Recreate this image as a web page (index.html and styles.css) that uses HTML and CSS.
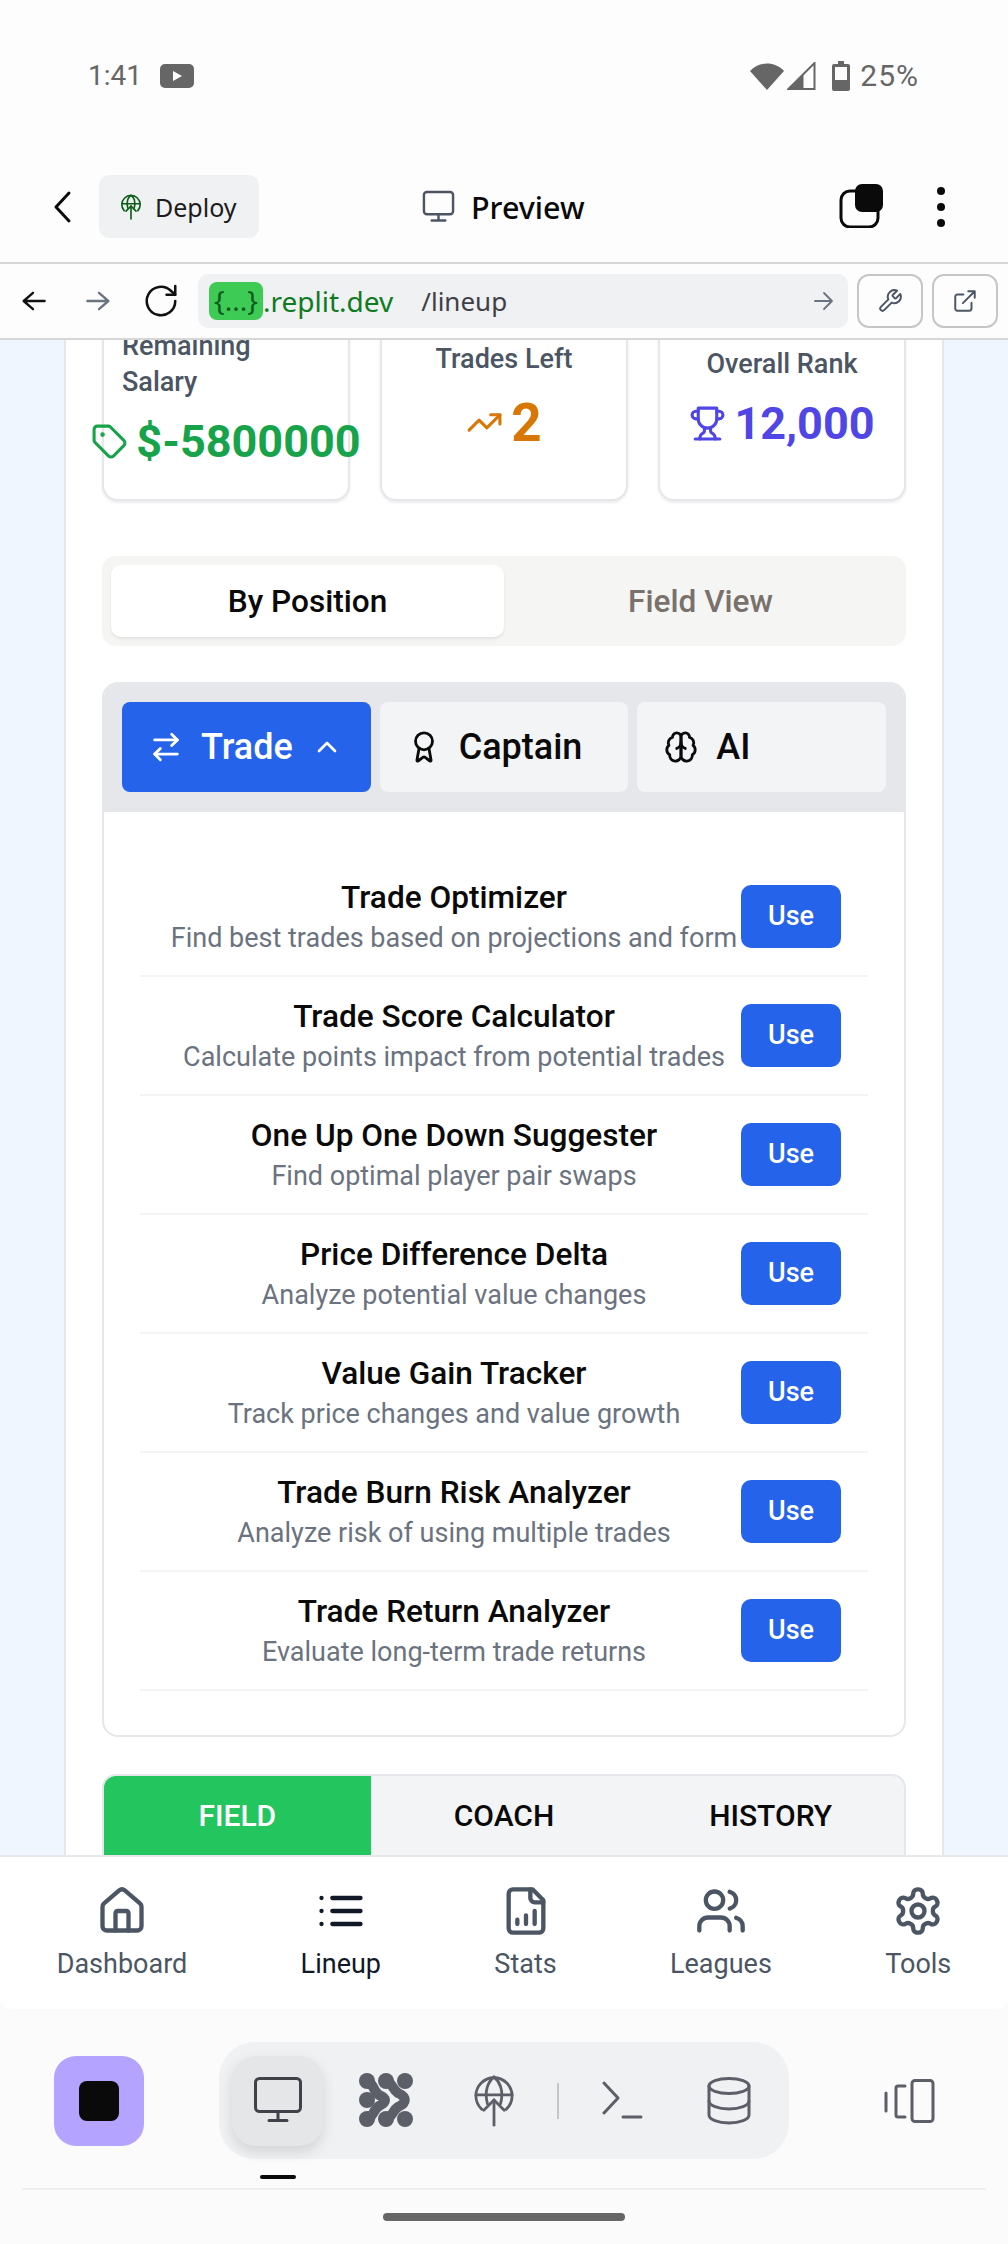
FILE: index.html
```html
<!DOCTYPE html>
<html lang="en">
<head>
    <meta charset="UTF-8">
    <meta name="viewport" content="width=device-width, initial-scale=1.0">
    <title>Lineup Preview</title>
    <link rel="stylesheet" href="styles.css">
</head>
<body>
    <div class="status-bar">
        <div class="status-left">
            <span>1:41</span>
            <svg class="yt-icon" viewBox="0 0 34 24"><rect width="34" height="24" rx="5" fill="#666"/><path d="M13 7l9 5-9 5z" fill="#fff"/></svg>
        </div>
        <div class="status-right">
            <svg class="wifi-icon" viewBox="0 0 34 28"><path d="M0 9C9 -1 25 -1 34 9L17 28z" fill="#666"/></svg>
            <svg class="signal-icon" viewBox="0 0 28 28"><path d="M27 1V27H1z" fill="none" stroke="#666" stroke-width="2"/><path d="M16 12V27H1z" fill="#666"/></svg>
            <svg class="battery-icon" viewBox="0 0 18 30"><path d="M6 0h6v3h4a2 2 0 0 1 2 2v23a2 2 0 0 1-2 2H2a2 2 0 0 1-2-2V5a2 2 0 0 1 2-2h4z" fill="#666"/><rect x="3" y="6" width="12" height="13" fill="#fcfcfc"/></svg>
            <span>25%</span>
        </div>
    </div>

    <div class="app-bar">
        <svg class="back-icon" viewBox="0 0 24 34"><path d="M18 3L5 17l13 14" fill="none" stroke="#0a0a0a" stroke-width="3" stroke-linecap="round" stroke-linejoin="round"/></svg>
        <div class="deploy-btn">
            <svg class="deploy-icon" viewBox="0 0 24 28" fill="none" stroke="currentColor" stroke-width="1.800" stroke-linecap="round"><path d="M4.500 18A10 10 0 1 1 19.500 18"/><path d="M8.500 15C6.500 8 9 3 12 1.500C15 3 17.500 8 15.500 15"/><path d="M2 10.500H22"/><path d="M12 27V13"/><path d="M6.500 18.500L12 13l5.500 5.500"/></svg>
            <span>Deploy</span>
        </div>
        <div class="preview-title">
            <svg class="monitor-icon" viewBox="0 0 34 34" fill="none" stroke="#4b5563" stroke-width="2.500" stroke-linecap="round" stroke-linejoin="round"><rect x="2" y="2" width="30" height="23" rx="3"/><path d="M17 25v6M10 31.500h14"/></svg>
            <span>Preview</span>
        </div>
        <svg class="tabs-icon" viewBox="0 0 44 44"><rect x="2" y="7" width="37" height="36" rx="9" fill="none" stroke="#0a0a0a" stroke-width="3"/><rect x="16" y="0" width="28" height="28" rx="7" fill="#0a0a0a"/></svg>
        <div class="dots"><i></i><i></i><i></i></div>
    </div>

    <div class="url-bar">
        <svg class="url-nav back" viewBox="0 0 24 24" fill="none" stroke="#111" stroke-width="2" stroke-linecap="round" stroke-linejoin="round"><path d="M12 19l-8-7 8-7M4 12h18"/></svg>
        <svg class="url-nav forward" viewBox="0 0 24 24" fill="none" stroke="#6b7280" stroke-width="2" stroke-linecap="round" stroke-linejoin="round"><path d="M12 5l8 7-8 7M20 12H2"/></svg>
        <svg class="url-nav reload" viewBox="0 0 24 24" fill="none" stroke="#111" stroke-width="1.600" stroke-linecap="round" stroke-linejoin="round"><path d="M21 12a9 9 0 1 1-2.800-6.500L21 8"/><path d="M21 2.500V8h-5.500"/></svg>
        <div class="url-field">
            <span class="url-repl">{...}</span><span class="url-domain">.replit.dev</span>
            <span class="url-path">/lineup</span>
            <svg class="url-go" viewBox="0 0 24 24" fill="none" stroke="#6b7280" stroke-width="1.800" stroke-linecap="round" stroke-linejoin="round"><path d="M12 4l8 8-8 8M20 12H3"/></svg>
        </div>
        <div class="url-btn">
            <svg viewBox="0 0 24 24" fill="none" stroke="#4b5563" stroke-width="1.800" stroke-linecap="round" stroke-linejoin="round"><path d="M14.700 6.300a1 1 0 0 0 0 1.400l1.600 1.600a1 1 0 0 0 1.400 0l3.770-3.770a6 6 0 0 1-7.940 7.940l-6.910 6.910a2.120 2.120 0 0 1-3-3l6.910-6.910a6 6 0 0 1 7.940-7.940l-3.760 3.760z"/></svg>
        </div>
        <div class="url-btn">
            <svg viewBox="0 0 24 24" fill="none" stroke="#4b5563" stroke-width="1.800" stroke-linecap="round" stroke-linejoin="round"><path d="M18 13.500V19a2 2 0 0 1-2 2H5a2 2 0 0 1-2-2V8a2 2 0 0 1 2-2h5.500"/><path d="M15 3h6v6M10 14L21 3"/></svg>
        </div>
    </div>

    <main class="viewport">
        <div class="panel">
            <div class="stats">
                <div class="stat-card salary">
                    <div class="stat-label">Remaining Salary</div>
                    <div class="stat-value green">
                        <svg class="stat-icon" viewBox="0 0 24 24" fill="none" stroke="currentColor" stroke-width="2" stroke-linecap="round" stroke-linejoin="round"><path d="M12.586 2.586A2 2 0 0 0 11.172 2H4a2 2 0 0 0-2 2v7.172a2 2 0 0 0 .586 1.414l8.704 8.704a2.426 2.426 0 0 0 3.420 0l6.580-6.580a2.426 2.426 0 0 0 0-3.420z"/><circle cx="7.500" cy="7.500" r=".5" fill="currentColor"/></svg>
                        <span>$-5800000</span>
                    </div>
                </div>
                <div class="stat-card trades">
                    <div class="stat-label">Trades Left</div>
                    <div class="stat-value orange">
                        <svg class="stat-icon" viewBox="0 0 24 24" fill="none" stroke="currentColor" stroke-width="2" stroke-linecap="round" stroke-linejoin="round"><path d="M22 7l-8.500 8.500-5-5L2 17"/><path d="M16 7h6v6"/></svg>
                        <span>2</span>
                    </div>
                </div>
                <div class="stat-card rank">
                    <div class="stat-label">Overall Rank</div>
                    <div class="stat-value indigo">
                        <svg class="stat-icon" viewBox="0 0 24 24" fill="none" stroke="currentColor" stroke-width="2" stroke-linecap="round" stroke-linejoin="round"><path d="M6 9H4.500a2.500 2.500 0 0 1 0-5H6"/><path d="M18 9h1.500a2.500 2.500 0 0 0 0-5H18"/><path d="M4 22h16"/><path d="M10 14.660V17c0 .55-.47.98-.97 1.210C7.850 18.750 7 20.240 7 22"/><path d="M14 14.660V17c0 .55.47.98.97 1.210C16.150 18.750 17 20.240 17 22"/><path d="M18 2H6v7a6 6 0 0 0 12 0V2Z"/></svg>
                        <span>12,000</span>
                    </div>
                </div>
            </div>

            <div class="view-toggle">
                <div class="toggle-item active">By Position</div>
                <div class="toggle-item">Field View</div>
            </div>

            <section class="tools-card">
                <div class="tools-tabs">
                    <div class="tool-tab active">
                        <svg viewBox="0 0 24 24" fill="none" stroke="currentColor" stroke-width="2" stroke-linecap="round" stroke-linejoin="round"><path d="M16 3l4 4-4 4"/><path d="M20 7H4"/><path d="M8 21l-4-4 4-4"/><path d="M4 17h16"/></svg>
                        <span>Trade</span>
                        <svg class="chevron" viewBox="0 0 24 24" fill="none" stroke="currentColor" stroke-width="2" stroke-linecap="round" stroke-linejoin="round"><path d="M18 15l-6-6-6 6"/></svg>
                    </div>
                    <div class="tool-tab">
                        <svg viewBox="0 0 24 24" fill="none" stroke="currentColor" stroke-width="2" stroke-linecap="round" stroke-linejoin="round"><path d="M15.477 12.890l1.515 8.526a.5.5 0 0 1-.81.47l-3.580-2.687a1 1 0 0 0-1.197 0l-3.586 2.686a.5.5 0 0 1-.81-.469l1.514-8.526"/><circle cx="12" cy="8" r="6"/></svg>
                        <span>Captain</span>
                    </div>
                    <div class="tool-tab">
                        <svg viewBox="0 0 24 24" fill="none" stroke="currentColor" stroke-width="2" stroke-linecap="round" stroke-linejoin="round"><path d="M12 5a3 3 0 1 0-5.997.125 4 4 0 0 0-2.526 5.770 4 4 0 0 0 .556 6.588A4 4 0 1 0 12 18Z"/><path d="M12 5a3 3 0 1 1 5.997.125 4 4 0 0 1 2.526 5.770 4 4 0 0 1-.556 6.588A4 4 0 1 1 12 18Z"/><path d="M15 13a4.500 4.500 0 0 1-3-4 4.500 4.500 0 0 1-3 4"/></svg>
                        <span>AI</span>
                    </div>
                </div>
                <div class="tools-list">
                    <div class="tool-row">
                        <div class="tool-text"><div class="tool-name">Trade Optimizer</div><div class="tool-desc">Find best trades based on projections and form</div></div>
                        <div class="use-btn">Use</div>
                    </div>
                    <div class="tool-row">
                        <div class="tool-text"><div class="tool-name">Trade Score Calculator</div><div class="tool-desc">Calculate points impact from potential trades</div></div>
                        <div class="use-btn">Use</div>
                    </div>
                    <div class="tool-row">
                        <div class="tool-text"><div class="tool-name">One Up One Down Suggester</div><div class="tool-desc">Find optimal player pair swaps</div></div>
                        <div class="use-btn">Use</div>
                    </div>
                    <div class="tool-row">
                        <div class="tool-text"><div class="tool-name">Price Difference Delta</div><div class="tool-desc">Analyze potential value changes</div></div>
                        <div class="use-btn">Use</div>
                    </div>
                    <div class="tool-row">
                        <div class="tool-text"><div class="tool-name">Value Gain Tracker</div><div class="tool-desc">Track price changes and value growth</div></div>
                        <div class="use-btn">Use</div>
                    </div>
                    <div class="tool-row">
                        <div class="tool-text"><div class="tool-name">Trade Burn Risk Analyzer</div><div class="tool-desc">Analyze risk of using multiple trades</div></div>
                        <div class="use-btn">Use</div>
                    </div>
                    <div class="tool-row">
                        <div class="tool-text"><div class="tool-name">Trade Return Analyzer</div><div class="tool-desc">Evaluate long-term trade returns</div></div>
                        <div class="use-btn">Use</div>
                    </div>
                </div>
            </section>

            <div class="team-tabs">
                <div class="team-tab active">FIELD</div>
                <div class="team-tab">COACH</div>
                <div class="team-tab">HISTORY</div>
            </div>
        </div>
    </main>

    <nav class="bottom-nav">
        <div class="nav-item">
            <svg viewBox="0 0 24 24" fill="none" stroke="currentColor" stroke-width="2" stroke-linecap="round" stroke-linejoin="round"><path d="M15 21v-8a1 1 0 0 0-1-1h-4a1 1 0 0 0-1 1v8"/><path d="M3 10a2 2 0 0 1 .709-1.528l7-5.999a2 2 0 0 1 2.582 0l7 5.999A2 2 0 0 1 21 10v9a2 2 0 0 1-2 2H5a2 2 0 0 1-2-2z"/></svg>
            <span>Dashboard</span>
        </div>
        <div class="nav-item active">
            <svg viewBox="0 0 24 24" fill="none" stroke="currentColor" stroke-width="2" stroke-linecap="round" stroke-linejoin="round"><path d="M8 6h13M8 12h13M8 18h13M3 6h.01M3 12h.01M3 18h.01"/></svg>
            <span>Lineup</span>
        </div>
        <div class="nav-item">
            <svg viewBox="0 0 24 24" fill="none" stroke="currentColor" stroke-width="2" stroke-linecap="round" stroke-linejoin="round"><path d="M15 2H6a2 2 0 0 0-2 2v16a2 2 0 0 0 2 2h12a2 2 0 0 0 2-2V7Z"/><path d="M14 2v4a2 2 0 0 0 2 2h4"/><path d="M8 18v-2M12 18v-4M16 18v-6"/></svg>
            <span>Stats</span>
        </div>
        <div class="nav-item">
            <svg viewBox="0 0 24 24" fill="none" stroke="currentColor" stroke-width="2" stroke-linecap="round" stroke-linejoin="round"><path d="M16 21v-2a4 4 0 0 0-4-4H6a4 4 0 0 0-4 4v2"/><circle cx="9" cy="7" r="4"/><path d="M22 21v-2a4 4 0 0 0-3-3.870"/><path d="M16 3.130a4 4 0 0 1 0 7.750"/></svg>
            <span>Leagues</span>
        </div>
        <div class="nav-item">
            <svg viewBox="0 0 24 24" fill="none" stroke="currentColor" stroke-width="2" stroke-linecap="round" stroke-linejoin="round"><path d="M12.220 2h-.44a2 2 0 0 0-2 2v.18a2 2 0 0 1-1 1.730l-.43.25a2 2 0 0 1-2 0l-.15-.08a2 2 0 0 0-2.730.73l-.22.38a2 2 0 0 0 .73 2.730l.15.1a2 2 0 0 1 1 1.720v.51a2 2 0 0 1-1 1.740l-.15.09a2 2 0 0 0-.73 2.730l.22.38a2 2 0 0 0 2.730.73l.15-.08a2 2 0 0 1 2 0l.43.25a2 2 0 0 1 1 1.730V20a2 2 0 0 0 2 2h.44a2 2 0 0 0 2-2v-.18a2 2 0 0 1 1-1.730l.43-.25a2 2 0 0 1 2 0l.15.08a2 2 0 0 0 2.730-.73l.22-.39a2 2 0 0 0-.73-2.730l-.15-.08a2 2 0 0 1-1-1.740v-.5a2 2 0 0 1 1-1.740l.15-.09a2 2 0 0 0 .73-2.730l-.22-.38a2 2 0 0 0-2.730-.73l-.15.08a2 2 0 0 1-2 0l-.43-.25a2 2 0 0 1-1-1.730V4a2 2 0 0 0-2-2z"/><circle cx="12" cy="12" r="3"/></svg>
            <span>Tools</span>
        </div>
    </nav>

    <div class="dock">
        <div class="stop-btn"><i></i></div>
        <div class="dock-pill">
            <div class="dock-item selected">
                <svg class="dock-monitor" viewBox="0 0 48 48" fill="none" stroke="#3f4249" stroke-width="3" stroke-linecap="round" stroke-linejoin="round"><rect x="1.500" y="1.500" width="45" height="33" rx="4"/><path d="M24 35v8M15 43.500h18"/></svg>
            </div>
            <div class="dock-item">
                <svg class="dock-blobs" viewBox="0 0 72 72"><g fill="none" stroke="#5c5f68" stroke-width="10" stroke-linecap="round"><path d="M17 16C23 17 23 26 29 30C37 33 37 37 29 41C23 45 23 53 17 54"/><path d="M36 16C42 17 42 24 48 28C57 32 57 38 48 42C42 46 42 53 36 54"/></g><g fill="#5c5f68"><circle cx="17" cy="16" r="8"/><circle cx="36" cy="16" r="8"/><circle cx="55" cy="16" r="8"/><circle cx="17" cy="35" r="8"/><circle cx="17" cy="54" r="8"/><circle cx="36" cy="54" r="8"/><circle cx="55" cy="54" r="8"/></g></svg>
            </div>
            <div class="dock-item">
                <svg viewBox="0 0 44 56" fill="none" stroke="#5c5f68" stroke-width="3" stroke-linecap="round"><path d="M9 37A19.500 19.500 0 1 1 35 37"/><path d="M15 31C11 17 16 7 22 2C28 7 33 17 29 31"/><path d="M2.500 21.500H41.500"/><path d="M22 54V27"/><path d="M11 38L22 27l11 11"/></svg>
            </div>
            <i class="dock-sep"></i>
            <div class="dock-item shell">
                <svg class="dock-shell" viewBox="0 0 44 40" fill="none" stroke="#5c5f68" stroke-width="3" stroke-linecap="round" stroke-linejoin="round"><path d="M3 2l14 15L3 32"/><path d="M22 36h18"/></svg>
            </div>
            <div class="dock-item">
                <svg class="dock-db" viewBox="0 0 44 48" fill="none" stroke="#5c5f68" stroke-width="3" stroke-linecap="round"><ellipse cx="22" cy="9" rx="20" ry="7.500"/><path d="M2 9v29c0 4.500 9 8 20 8s20-3.500 20-8V9"/><path d="M2 24c0 4.500 9 8 20 8s20-3.500 20-8"/></svg>
            </div>
        </div>
        <svg class="panels-icon" viewBox="0 0 52 44" fill="none" stroke="#5c5f68" stroke-width="3" stroke-linecap="round" stroke-linejoin="round"><rect x="29" y="1.500" width="21" height="41" rx="3"/><path d="M22 7h-7a2 2 0 0 0-2 2v27a2 2 0 0 0 2 2h7"/><path d="M3 14v18"/></svg>
    </div>
    <div class="dock-marker"></div>
    <div class="dock-line"></div>
    <div class="home-bar"></div>
</body>
</html>
```

FILE: styles.css
```css
* {
    margin: 0;
    padding: 0;
    box-sizing: border-box;
}

body {
    width: 1008px;
    height: 2244px;
    overflow: hidden;
    display: flex;
    flex-direction: column;
    font-family: Roboto, Arial, sans-serif;
    background-color: #fbfbfb;
    color: #0a0a0a;
}

/* phone status bar */
.status-bar {
    height: 175px;
    flex-shrink: 0;
    padding: 59px 89px 0 88px;
    display: flex;
    justify-content: space-between;
    align-items: flex-start;
    background-color: #fdfdfd;
    font-size: 28px;
    line-height: 34px;
    color: #666;
}

.status-left,
.status-right {
    display: flex;
    align-items: center;
}

.status-left {
    gap: 18px;
}

.yt-icon {
    width: 34px;
    height: 24px;
}

.status-right span {
    font-size: 30px;
    letter-spacing: 1px;
}

.wifi-icon {
    width: 34px;
    height: 28px;
    margin-right: 3px;
}

.signal-icon {
    width: 29px;
    height: 28px;
    margin-right: 16px;
}

.battery-icon {
    width: 18px;
    height: 30px;
    margin-right: 10px;
}

/* preview header */
.app-bar {
    height: 89px;
    flex-shrink: 0;
    display: flex;
    align-items: flex-start;
    padding-left: 51px;
    background-color: #fdfdfd;
    border-bottom: 2px solid #d6d6d6;
}

.back-icon {
    width: 24px;
    height: 34px;
    margin-top: 15px;
    margin-right: 24px;
}

.deploy-btn {
    width: 160px;
    height: 63px;
    display: flex;
    align-items: center;
    gap: 13px;
    padding-left: 21px;
    border-radius: 10px;
    background-color: #f0f1f2;
    font-family: "Noto Sans", sans-serif;
    font-size: 25px;
    color: #1c1c1c;
}

.deploy-icon {
    width: 22px;
    height: 28px;
    color: #0b5f17;
}

.preview-title {
    display: flex;
    align-items: center;
    gap: 16px;
    margin-left: 163px;
    height: 63px;
    font-family: "Noto Sans", sans-serif;
    font-size: 30.500px;
    font-weight: 500;
}

.monitor-icon {
    width: 33px;
    height: 33px;
}

.tabs-icon {
    width: 44px;
    height: 44px;
    margin-left: 254px;
    margin-top: 9px;
}

.dots {
    display: flex;
    flex-direction: column;
    gap: 8px;
    margin-left: 54px;
    margin-top: 12px;
}

.dots i {
    width: 8px;
    height: 8px;
    border-radius: 50%;
    background-color: #0a0a0a;
}

/* url row */
.url-bar {
    height: 76px;
    flex-shrink: 0;
    display: flex;
    align-items: center;
    padding: 0 10px 0 19px;
    background-color: #fdfdfd;
    border-bottom: 2px solid #d6d6d6;
}

.url-nav {
    flex-shrink: 0;
    width: 28px;
    height: 28px;
}

.url-nav.back {
    margin-right: 38px;
}

.url-nav.forward {
    margin-right: 29px;
}

.url-nav.reload {
    width: 38px;
    height: 38px;
    margin-right: 18px;
}

.url-field {
    flex: 1;
    height: 54px;
    display: flex;
    align-items: center;
    padding: 0 12px 0 11px;
    border-radius: 10px;
    background-color: #f0f1f3;
    font-family: "Noto Sans", sans-serif;
    font-size: 28px;
}

.url-repl {
    width: 54px;
    height: 38px;
    line-height: 36px;
    text-align: center;
    font-size: 28px;
    border-radius: 8px;
    background-color: #3dca55;
    color: #0e5a20;
}

.url-domain {
    color: #0e7a22;
}

.url-path {
    margin-left: 28px;
    color: #3f3f46;
    font-size: 26px;
}

.url-go {
    width: 24px;
    height: 24px;
    margin-left: auto;
}

.url-btn {
    width: 66px;
    height: 54px;
    margin-left: 9px;
    flex-shrink: 0;
    display: flex;
    align-items: center;
    justify-content: center;
    border: 2px solid #c4c6c8;
    border-radius: 12px;
}

.url-btn svg {
    width: 26px;
    height: 26px;
}

/* scrolled page */
.viewport {
    flex: 1;
    min-height: 0;
    overflow: hidden;
    background-color: #eff6ff;
}

.panel {
    width: 880px;
    margin: -42px 0 0 64px;
    padding: 0 36px;
    background-color: #fff;
    border-left: 2px solid #e5e7eb;
    border-right: 2px solid #e5e7eb;
}

.stats {
    display: grid;
    grid-template-columns: repeat(3, 1fr);
    gap: 30px;
    height: 203px;
}

.stat-card {
    min-width: 0;
    display: flex;
    flex-direction: column;
    justify-content: center;
    gap: 12px;
    padding: 0 18px;
    background-color: #fff;
    border: 2px solid #e5e7eb;
    border-radius: 16px;
    box-shadow: 0 2px 3px rgba(0, 0, 0, 0.08);
    text-align: center;
}

.trades {
    gap: 16px;
    padding-bottom: 6px;
}

.stat-label {
    font-size: 27px;
    line-height: 36px;
    font-weight: 500;
    color: #4b5563;
}

.salary .stat-label {
    text-align: left;
}

.stat-value {
    display: flex;
    align-items: center;
    justify-content: center;
    gap: 8px;
    font-size: 45px;
    line-height: 60px;
    font-weight: 700;
    white-space: nowrap;
}

.stat-icon {
    width: 37px;
    height: 37px;
    flex-shrink: 0;
}

.green { color: #16a34a; }
.orange { color: #d97706; }
.indigo { color: #4f46e5; }

.orange span {
    font-size: 53px;
}

.view-toggle {
    display: grid;
    grid-template-columns: 1fr 1fr;
    margin-top: 55px;
    height: 90px;
    padding: 9px;
    border-radius: 14px;
    background-color: #f5f5f4;
}

.toggle-item {
    display: flex;
    align-items: center;
    justify-content: center;
    font-size: 31.600px;
    font-weight: 500;
    color: #78716c;
    border-radius: 10px;
}

.toggle-item.active {
    background-color: #fff;
    color: #0a0a0a;
    box-shadow: 0 2px 3px rgba(0, 0, 0, 0.08);
}

/* tools card */
.tools-card {
    margin-top: 36px;
    height: 1055px;
    border: 2px solid #e5e7eb;
    border-radius: 16px;
    overflow: hidden;
}

.tools-tabs {
    display: grid;
    grid-template-columns: repeat(3, 1fr);
    gap: 9px;
    height: 128px;
    padding: 18px 18px 20px;
    background-color: #e5e7eb;
}

.tool-tab {
    display: flex;
    align-items: center;
    gap: 18px;
    padding-left: 27px;
    border-radius: 8px;
    background-color: #f3f4f6;
    font-size: 36px;
    font-weight: 500;
}

.tool-tab svg {
    width: 34px;
    height: 34px;
}

.tool-tab.active {
    background-color: #2563eb;
    color: #fff;
}

.tool-tab .chevron {
    width: 32px;
    height: 32px;
}

.tools-list {
    padding: 46px 36px 0;
}

.tool-row {
    height: 119px;
    display: flex;
    align-items: center;
    padding: 0 27px;
    border-bottom: 2px solid #f3f4f6;
}

.tool-text {
    flex: 1;
    padding-top: 2px;
    text-align: center;
}

.tool-name {
    font-size: 31.600px;
    line-height: 41px;
    font-weight: 500;
}

.tool-desc {
    font-size: 27px;
    line-height: 40px;
    color: #6b7280;
    white-space: nowrap;
}

.use-btn {
    width: 100px;
    height: 63px;
    flex-shrink: 0;
    display: flex;
    align-items: center;
    justify-content: center;
    padding-bottom: 2px;
    border-radius: 10px;
    background-color: #2563eb;
    color: #fff;
    font-size: 27px;
    font-weight: 500;
}

.team-tabs {
    display: grid;
    grid-template-columns: repeat(3, 1fr);
    height: 100px;
    margin-top: 37px;
    border: 2px solid #e5e7eb;
    border-radius: 14px 14px 0 0;
    background-color: #f3f4f6;
    overflow: hidden;
}

.team-tab {
    padding-top: 20px;
    text-align: center;
    font-size: 30px;
    line-height: 40px;
    font-weight: 500;
}

.team-tab.active {
    background-color: #22c55e;
    color: #fff;
}

/* app bottom nav */
.bottom-nav {
    height: 154px;
    flex-shrink: 0;
    display: flex;
    justify-content: space-around;
    padding-top: 28px;
    background-color: #fff;
    border-top: 2px solid #e5e7eb;
    border-radius: 0 0 12px 12px;
}

.nav-item {
    display: flex;
    flex-direction: column;
    align-items: center;
    gap: 9px;
    font-size: 27px;
    line-height: 36px;
    color: #4b5563;
}

.nav-item svg {
    width: 52px;
    height: 52px;
}

.nav-item.active {
    color: #111827;
}

/* replit dock */
.dock {
    height: 117px;
    flex-shrink: 0;
    margin-top: 33px;
    display: flex;
    align-items: center;
    padding-left: 54px;
}

.stop-btn {
    width: 90px;
    height: 90px;
    display: flex;
    align-items: center;
    justify-content: center;
    border-radius: 22px;
    background-color: #b4a3ff;
}

.stop-btn i {
    width: 40px;
    height: 40px;
    border-radius: 8px;
    background-color: #0a0a0a;
}

.dock-pill {
    width: 570px;
    height: 117px;
    margin-left: 75px;
    display: flex;
    align-items: center;
    padding-left: 13px;
    border-radius: 36px;
    background-color: #f0f1f3;
}

.dock-item {
    width: 91px;
    height: 90px;
    margin-right: 17px;
    flex-shrink: 0;
    display: flex;
    align-items: center;
    justify-content: center;
    border-radius: 24px;
}

.dock-item.shell {
    margin-right: 15px;
}

.dock-item svg {
    width: 52px;
    height: 52px;
}

.dock-item .dock-monitor {
    width: 48px;
    height: 48px;
}

.dock-item .dock-blobs {
    width: 72px;
    height: 72px;
}

.dock-item .dock-shell {
    width: 44px;
    height: 40px;
}

.dock-item .dock-db {
    width: 44px;
    height: 48px;
}

.dock-item.selected {
    background-color: #e5e6e8;
    box-shadow: 0 6px 14px rgba(0, 0, 0, 0.12);
}

.dock-sep {
    width: 2px;
    height: 36px;
    flex-shrink: 0;
    margin: 0 18px 0 1px;
    background-color: #c4c6c8;
}

.panels-icon {
    width: 52px;
    height: 44px;
    margin-left: 94px;
}

.dock-marker {
    width: 36px;
    height: 4px;
    margin: 16px 0 0 260px;
    border-radius: 2px;
    background-color: #0a0a0a;
}

.dock-line {
    height: 2px;
    margin: 9px 22px 0;
    background-color: #efefef;
}

.home-bar {
    width: 242px;
    height: 8px;
    margin: 23px auto 23px;
    border-radius: 4px;
    background-color: #666;
}
```
